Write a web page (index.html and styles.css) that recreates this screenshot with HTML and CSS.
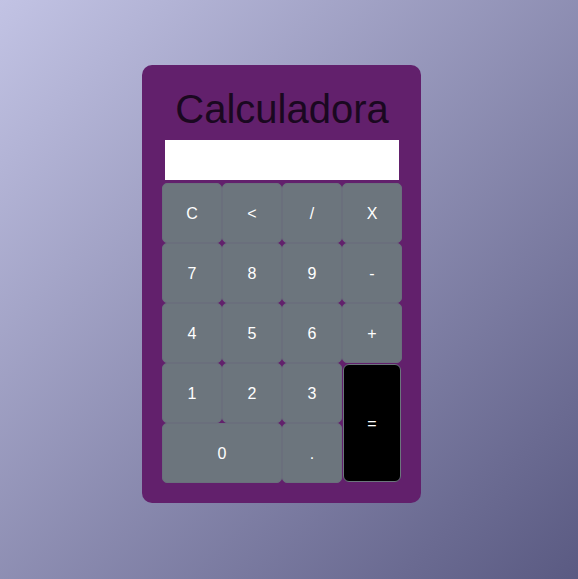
FILE: index.html
```html
<!DOCTYPE html>
<html lang="es">
<head>
<meta charset="utf-8">
<title>Calculadora</title>
<link rel="stylesheet" href="styles.css">
</head>
<body>
<div class="card">
  <h1 class="title">Calculadora</h1>
  <input class="display" type="text">
  <div class="keys">
    <button class="key">C</button>
    <button class="key">&lt;</button>
    <button class="key">/</button>
    <button class="key">X</button>
    <button class="key">7</button>
    <button class="key">8</button>
    <button class="key">9</button>
    <button class="key">-</button>
    <button class="key">4</button>
    <button class="key">5</button>
    <button class="key">6</button>
    <button class="key">+</button>
    <button class="key">1</button>
    <button class="key">2</button>
    <button class="key">3</button>
    <button class="key key-equals">=</button>
    <button class="key key-zero">0</button>
    <button class="key">.</button>
  </div>
</div>
</body>
</html>
```
FILE: styles.css
```css
html, body {
  margin: 0;
  height: 100%;
}
body {
  background: linear-gradient(to bottom right, #c2c3e4, #5a5a82);
  font-family: "Liberation Sans", Arial, sans-serif;
  overflow: hidden;
}
.card {
  box-sizing: border-box;
  width: 279px;
  margin: 65px 0 0 142px;
  padding: 21px 19px 20px 20px;
  background: #62206c;
  border-radius: 10px;
}
.title {
  margin: 0;
  font-size: 40px;
  line-height: 46px;
  font-weight: normal;
  text-align: center;
  color: #1a0820;
}
.display {
  display: block;
  box-sizing: border-box;
  width: 234px;
  height: 40px;
  margin: 8px 0 3px 3px;
  border: none;
  background: #fff;
  padding: 0 8px;
}
.keys {
  display: grid;
  grid-template-columns: repeat(4, 60px);
  grid-auto-rows: 60px;
}
.key {
  box-sizing: border-box;
  background: #6c757d;
  color: #fff;
  border: 1px solid #6a6f7c;
  border-radius: 5px;
  font-family: "Liberation Sans", Arial, sans-serif;
  font-size: 16px;
  padding: 1px 0 0;
}
.key-equals {
  grid-row: span 2;
  margin: 1px;
  background: #000;
  border-color: #6c757d;
  border-radius: 6px;
}
.key-zero {
  grid-column: span 2;
}
```
